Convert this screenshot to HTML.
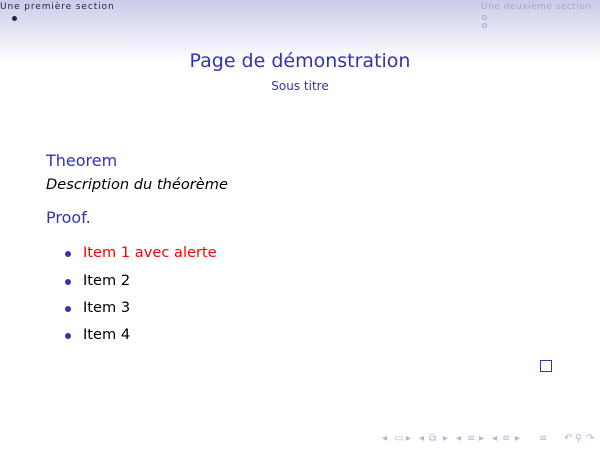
<!DOCTYPE html>
<html><head><meta charset="utf-8"><style>
body{margin:0;width:600px;height:450px;position:relative;overflow:hidden;background:#fff;font-family:"DejaVu Sans","Liberation Sans",sans-serif;}
.hdr{position:absolute;left:0;top:0;width:600px;height:62px;background:linear-gradient(#cbcbe9,#e4e4f4 50%,#fff);}
.t{position:absolute;white-space:nowrap;}
.dot{position:absolute;border-radius:50%;}
.n{position:absolute;top:433px;font-size:10px;color:#b3b3e3;}
</style></head><body>
<div class="hdr"></div>
<div class="t" style="left:0;top:2px;font-size:9px;letter-spacing:0.9px;color:#222250;">Une première section</div>
<div class="dot" style="left:12px;top:16px;width:5px;height:5px;background:#222250"></div>
<div class="t" style="left:481px;top:2px;font-size:9px;letter-spacing:0.5px;color:#a8a8c0;">Une deuxième section</div>
<div class="dot" style="left:482px;top:15px;width:3px;height:3px;border:1px solid #a8a8c0"></div>
<div class="dot" style="left:482px;top:23px;width:3px;height:3px;border:1px solid #a8a8c0"></div>
<div class="t" style="left:0;width:600px;text-align:center;top:50px;font-size:19px;color:#3333b3;">Page de démonstration</div>
<div class="t" style="left:0;width:600px;text-align:center;top:79px;font-size:12px;color:#3333b3;">Sous titre</div>
<div class="t" style="left:46px;top:151px;font-size:16px;color:#3333b3;">Theorem</div>
<div class="t" style="left:46px;top:176px;font-size:14.6px;font-style:italic;color:#000;">Description du théorème</div>
<div class="t" style="left:46px;top:208px;font-size:16px;color:#3333b3;">Proof.</div>
<div class="dot" style="left:65px;top:251px;width:6px;height:6px;background:#3333b3"></div>
<div class="t" style="left:83px;top:244px;font-size:14.6px;color:#ff0000;">Item 1 avec alerte</div>
<div class="dot" style="left:65px;top:279px;width:6px;height:6px;background:#3333b3"></div>
<div class="t" style="left:83px;top:272px;font-size:14.6px;">Item 2</div>
<div class="dot" style="left:65px;top:306px;width:6px;height:6px;background:#3333b3"></div>
<div class="t" style="left:83px;top:299px;font-size:14.6px;">Item 3</div>
<div class="dot" style="left:65px;top:333px;width:6px;height:6px;background:#3333b3"></div>
<div class="t" style="left:83px;top:326px;font-size:14.6px;">Item 4</div>
<div style="position:absolute;left:540px;top:360px;width:10px;height:10px;border:1px solid #3333b3;"></div>
<span class="n" style="left:382px">◂</span><span class="n" style="left:394px">▭</span><span class="n" style="left:406px">▸</span>
<span class="n" style="left:419px">◂</span><span class="n" style="left:429px">⧉</span><span class="n" style="left:443px">▸</span>
<span class="n" style="left:456px">◂</span><span class="n" style="left:467px">≡</span><span class="n" style="left:479px">▸</span>
<span class="n" style="left:492px">◂</span><span class="n" style="left:502px">≡</span><span class="n" style="left:515px">▸</span>
<span class="n" style="left:539px">≡</span>
<span class="n" style="left:564px">↶</span><span class="n" style="left:575px">⚲</span><span class="n" style="left:586px">↷</span>
</body></html>
